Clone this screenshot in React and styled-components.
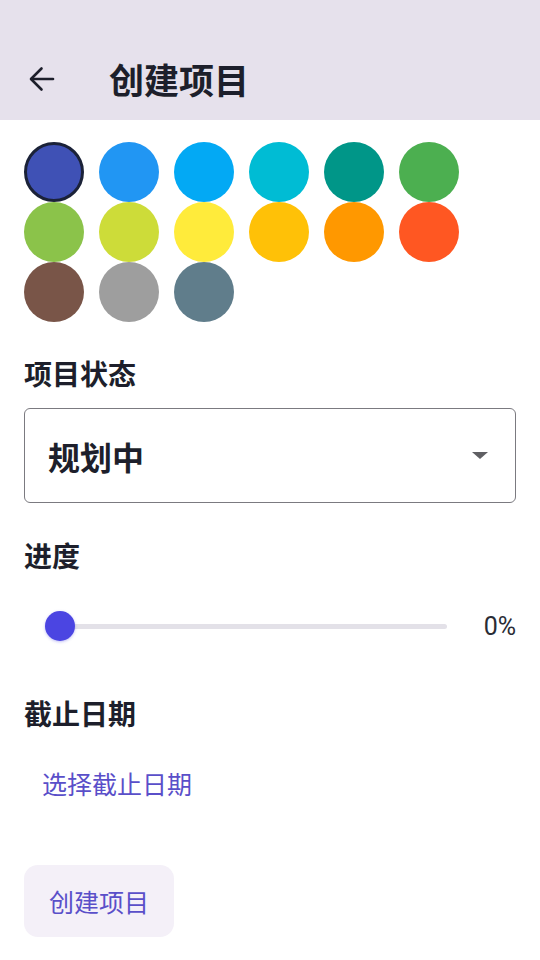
import React from 'react';
import styled, { createGlobalStyle } from 'styled-components';

const GlobalStyle = createGlobalStyle`
    body {
        margin: 0;
        background: #fff;
        font-family: "Noto Sans CJK SC", "Noto Sans", Roboto, sans-serif;
        color: #1d1f2b;
    }
`;

const Page = styled.div`
    width: 540px;
    height: 960px;
    overflow: hidden;
    background: #fff;
`;

const HeaderBlock = styled.div`
    display: flex;
    align-items: center;
    height: 120px;
    padding: 38px 0 0 28px;
    box-sizing: border-box;
    background-color: #e6e1ec;
`;

const BackButton = styled.div`
    display: flex;
    align-items: center;
    justify-content: center;
    width: 28px;
    height: 28px;
    margin-right: 53px;
`;

const Title = styled.h1`
    margin: 0;
    font-size: 35px;
    font-weight: 700;
    line-height: 40px;
    color: #1d1f2b;
`;

const Content = styled.div`
    display: flex;
    flex-direction: column;
    padding: 22px 24px 0 24px;
`;

const ColorGrid = styled.div`
    display: grid;
    grid-template-columns: repeat(6, 60px);
    grid-auto-rows: 60px;
    column-gap: 15px;
`;

const Swatch = styled.div`
    width: 60px;
    height: 60px;
    border-radius: 50%;
    box-sizing: border-box;
    background-color: ${props => props.color};
    border: ${props => (props.selected ? '3px solid #1b2238' : 'none')};
`;

const Label = styled.div`
    font-size: 28px;
    font-weight: 700;
    line-height: 32px;
    color: #1d1f2b;
    margin-top: ${props => props.top}px;
`;

const SelectBox = styled.div`
    display: flex;
    align-items: center;
    justify-content: space-between;
    height: 95px;
    margin-top: 19px;
    padding: 0 27px 0 23px;
    box-sizing: border-box;
    border: 1px solid #7b7a80;
    border-radius: 6px;
`;

const SelectValue = styled.span`
    font-size: 32px;
    font-weight: 700;
    color: #1d1f2b;
`;

const Caret = styled.div`
    width: 0;
    height: 0;
    border-left: 8px solid transparent;
    border-right: 8px solid transparent;
    border-top: 7px solid #5f5f63;
`;

const SliderRow = styled.div`
    display: flex;
    align-items: center;
    height: 30px;
    margin-top: 40px;
`;

const SliderTrack = styled.div`
    position: relative;
    flex: 1;
    height: 30px;
    margin: 0 37px 0 21px;
`;

const TrackLine = styled.div`
    position: absolute;
    left: 15px;
    right: 0;
    top: 13px;
    height: 5px;
    border-radius: 3px;
    background-color: #e3e1e8;
`;

const Thumb = styled.div`
    position: absolute;
    left: 0;
    top: 0;
    width: 30px;
    height: 30px;
    border-radius: 50%;
    background-color: #4b45e2;
    box-shadow: 0 1px 3px rgba(75, 69, 226, 0.35);
`;

const Percent = styled.span`
    font-family: Roboto, "Noto Sans", sans-serif;
    font-size: 25px;
    color: #2a2c35;
`;

const DateLink = styled.div`
    align-self: flex-start;
    margin-top: 30px;
    padding: 10px 18px;
    font-size: 25px;
    line-height: 28px;
    color: #5a4fc9;
`;

const CreateButton = styled.div`
    align-self: flex-start;
    display: flex;
    align-items: center;
    height: 72px;
    margin-top: 58px;
    padding: 0 25px;
    box-sizing: border-box;
    border-radius: 14px;
    background-color: #f4f0f8;
    font-size: 25px;
    color: #5a4fc9;
`;

const colors = [
    '#3f51b5', '#2196f3', '#03a9f4', '#00bcd4', '#009688', '#4caf50',
    '#8bc34a', '#cddc39', '#ffeb3b', '#ffc107', '#ff9800', '#ff5722',
    '#795548', '#9e9e9e', '#607d8b'
];

const App = () => {
    return (
        <>
            <GlobalStyle />
            <Page>
                <HeaderBlock>
                    <BackButton>
                        <svg width="26" height="26" viewBox="0 0 26 26" fill="none" stroke="#1d1f2b" strokeWidth="2.6" strokeLinecap="round" strokeLinejoin="round">
                            <path d="M24 13H2.5" />
                            <path d="M12.5 2.5L2 13l10.5 10.5" />
                        </svg>
                    </BackButton>
                    <Title>创建项目</Title>
                </HeaderBlock>
                <Content>
                    <ColorGrid>
                        {colors.map((c, i) => (
                            <Swatch key={c} color={c} selected={i === 0} />
                        ))}
                    </ColorGrid>

                    <Label top={35}>项目状态</Label>
                    <SelectBox>
                        <SelectValue>规划中</SelectValue>
                        <Caret />
                    </SelectBox>

                    <Label top={36}>进度</Label>
                    <SliderRow>
                        <SliderTrack>
                            <TrackLine />
                            <Thumb />
                        </SliderTrack>
                        <Percent>0%</Percent>
                    </SliderRow>

                    <Label top={56}>截止日期</Label>
                    <DateLink>选择截止日期</DateLink>

                    <CreateButton>创建项目</CreateButton>
                </Content>
            </Page>
        </>
    );
};

export default App;
